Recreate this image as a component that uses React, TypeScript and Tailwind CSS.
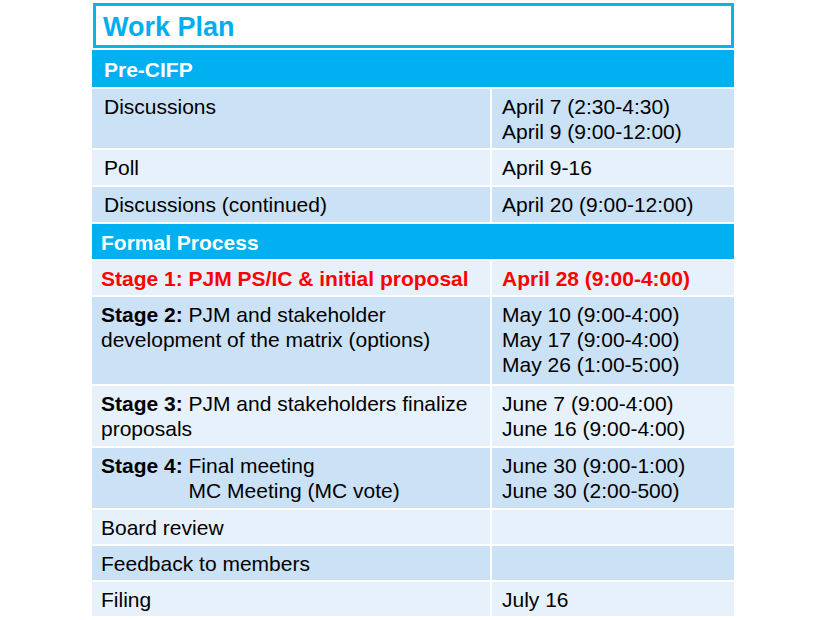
import React from "react";

const DARK = "bg-[#cbe2f6]";
const LIGHT = "bg-[#e6f1fb]";

type Row = {
  left: React.ReactNode;
  right?: React.ReactNode;
  bg: string;
  lp?: string;
  pb?: string;
  red?: boolean;
};

function DataRow({ left, right, bg, lp = "pl-[12px]", pb = "pb-[5px]", red }: Row) {
  const txt = red ? "text-[#ff0000] font-bold" : "text-black";
  return (
    <div className="grid grid-cols-[398px_242px] gap-[2px]">
      <div className={`${bg} ${lp} pt-[5px] ${pb} pr-2 ${txt}`}>{left}</div>
      <div className={`${bg} pl-[10px] pt-[5px] ${pb} ${txt}`}>{right}</div>
    </div>
  );
}

function Section({ title, lp = "pl-[12px]", h = "h-[36px]" }: { title: string; lp?: string; h?: string }) {
  return (
    <div className={`bg-[#00b0f0] text-white font-bold ${lp} ${h} flex items-center`}>
      <span className="pt-[1px]">{title}</span>
    </div>
  );
}

export default function App() {
  return (
    <div
      className="w-[826px] h-[620px] bg-white overflow-hidden"
      style={{ fontFamily: '"Liberation Sans", Arial, sans-serif' }}
    >
      <div className="ml-[92px] mt-[3px] w-[642px] flex flex-col gap-[2px] text-[21px] leading-[25px]">
        <div className="ml-[1px] h-[45px] border-[3px] border-[#0db1ee] flex items-center pl-[7px]">
          <span className="text-[#00aeef] font-bold text-[27px] leading-[30px] pt-[2px]">Work Plan</span>
        </div>
        <Section title="Pre-CIFP" h="h-[37px]" />
        <DataRow
          bg={DARK}
          pb="pb-[4px]"
          left="Discussions"
          right={
            <>
              <div>April 7 (2:30-4:30)</div>
              <div>April 9 (9:00-12:00)</div>
            </>
          }
        />
        <DataRow bg={LIGHT} left="Poll" right="April 9-16" />
        <DataRow bg={DARK} left="Discussions (continued)" right="April 20 (9:00-12:00)" />
        <Section title="Formal Process" lp="pl-[9px]" h="h-[35px]" />
        <DataRow
          bg={LIGHT}
          lp="pl-[9px]"
          pb="pb-[4px]"
          red
          left="Stage 1: PJM PS/IC & initial proposal"
          right="April 28 (9:00-4:00)"
        />
        <div className="grid grid-cols-[398px_242px] gap-[2px]">
          <div className={`${DARK} pl-[9px] pt-[5px] pb-[7px] pr-2`}>
            <span className="font-bold">Stage 2:</span> PJM and stakeholder development of the matrix (options)
          </div>
          <div className={`${DARK} pl-[10px] pt-[5px] pb-[7px]`}>
            <div>May 10 (9:00-4:00)</div>
            <div>May 17 (9:00-4:00)</div>
            <div>May 26 (1:00-5:00)</div>
          </div>
        </div>
        <DataRow
          bg={LIGHT}
          lp="pl-[9px]"
          left={
            <>
              <span className="font-bold">Stage 3:</span> PJM and stakeholders finalize proposals
            </>
          }
          right={
            <>
              <div>June 7 (9:00-4:00)</div>
              <div>June 16 (9:00-4:00)</div>
            </>
          }
        />
        <div className="grid grid-cols-[398px_242px] gap-[2px]">
          <div className={`${DARK} pl-[9px] pt-[5px] pb-[5px] pr-2 flex`}>
            <span className="font-bold whitespace-pre">Stage 4: </span>
            <div>
              <div>Final meeting</div>
              <div>MC Meeting (MC vote)</div>
            </div>
          </div>
          <div className={`${DARK} pl-[10px] pt-[5px] pb-[5px]`}>
            <div>June 30 (9:00-1:00)</div>
            <div>June 30 (2:00-500)</div>
          </div>
        </div>
        <DataRow bg={LIGHT} lp="pl-[9px]" pb="pb-[4px]" left="Board review" right="" />
        <DataRow bg={DARK} lp="pl-[9px]" pb="pb-[4px]" left="Feedback to members" right="" />
        <DataRow bg={LIGHT} lp="pl-[9px]" pb="pb-[4px]" left="Filing" right="July 16" />
      </div>
    </div>
  );
}
